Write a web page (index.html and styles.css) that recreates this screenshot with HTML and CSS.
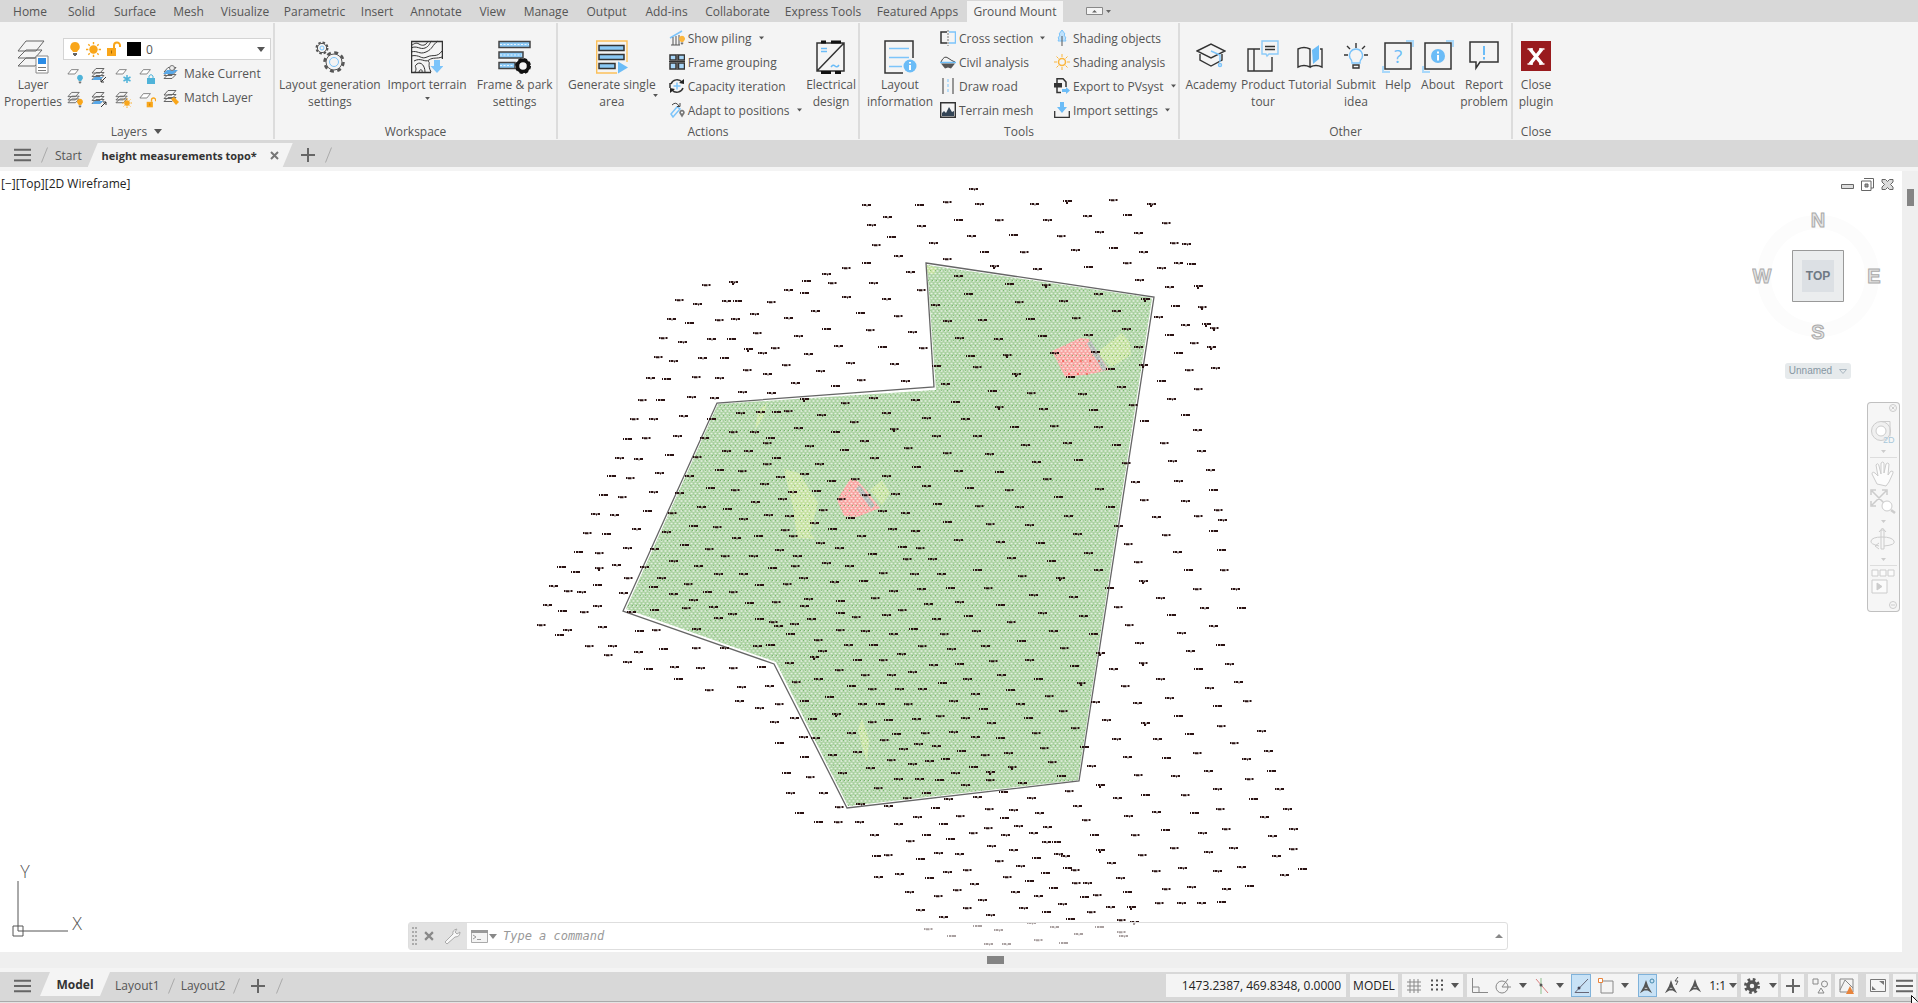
FILE: index.html
```html
<!DOCTYPE html>
<html lang="en">
<head>
<meta charset="utf-8">
<title>height measurements topo*</title>
<link rel="stylesheet" href="styles.css">
</head>
<body>
<svg class="defs" aria-hidden="true">
  <defs>
    <symbol id="sheet" viewBox="0 0 16 16"><path d="M5 3h8l-4 5H1z" fill="#fff" stroke="#777"/></symbol>
    <symbol id="stack" viewBox="0 0 16 16"><path d="M5 8.500h8l-4 4H1zM5 5.500h8l-4 4H1zM5 1.500h8l-4 4.500H1z" fill="#f4f4f4" stroke="#666"/></symbol>
    <symbol id="bulb" viewBox="0 0 12 16"><path d="M6 1a4.800 4.800 0 0 1 3 8.500L8 11H4L3 9.500A4.800 4.800 0 0 1 6 1z" fill="currentColor"/><path d="M4 12h4v2H7v1H5v-1H4z" fill="#666"/></symbol>
    <symbol id="sun" viewBox="0 0 16 16"><circle cx="8" cy="8" r="4.500" fill="currentColor"/><path d="M8 0v2.500M8 13.500V16M0 8h2.500M13.500 8H16M2.500 2.500l1.500 1.500M12 12l1.500 1.500M13.500 2.500L12 4M4 12l-1.500 1.500" stroke="currentColor" stroke-width="1.500"/></symbol>
    <symbol id="lock" viewBox="0 0 16 16"><path d="M1 7h9v8H1z" fill="currentColor"/><path d="M8 7V4.500a3 3 0 0 1 6 0V6" fill="none" stroke="currentColor" stroke-width="2"/><path d="M5.500 9.500v3" stroke="#a86a00"/></symbol>
    <symbol id="tri" viewBox="0 0 8 5"><path d="M0 0h8L4 5z" fill="currentColor"/></symbol>
    <symbol id="menu" viewBox="0 0 18 14"><path d="M0 1.500h18M0 7h18M0 12.500h18" stroke="#666" stroke-width="2"/></symbol>
    <symbol id="slash" viewBox="0 0 7 16"><path d="M.5 15.500l6-15" stroke="#aaa"/></symbol>
    <symbol id="plus" viewBox="0 0 16 16"><path d="M8 1v14M1 8h14" stroke="#666" stroke-width="2"/></symbol>
    <symbol id="compass" viewBox="0 0 16 16"><path d="M8 0l2.500 7L15 15l-5-3H6l-5 3 4.500-8z" fill="#555"/><path d="M6.500 9.500h3" stroke="#eee"/></symbol>
  </defs>
</svg>

<nav class="menu-tabs" aria-label="Ribbon tabs">
  <a href="#">Home</a><a href="#">Solid</a><a href="#">Surface</a><a href="#">Mesh</a><a href="#">Visualize</a><a href="#">Parametric</a><a href="#">Insert</a><a href="#">Annotate</a><a href="#">View</a><a href="#">Manage</a><a href="#">Output</a><a href="#">Add-ins</a><a href="#">Collaborate</a><a href="#">Express Tools</a><a href="#">Featured Apps</a><a href="#" class="current">Ground Mount</a>
  <button class="collapse" aria-label="Minimize ribbon"><svg width="28" height="9" viewBox="0 0 28 9"><path d="M.5.500h16v7H.5z" fill="#f4f4f4" stroke="#888"/><path d="M6 5.500h5L8.500 3zM20 3h5l-2.500 3z" fill="#666"/></svg></button>
</nav>

<header class="ribbon">
  <section class="panel layers">
    <div class="panel-body">
      <button class="big"><svg width="32" height="34" viewBox="0 0 32 34"><g fill="#f4f4f4" stroke="#666"><path d="M9 18h16l-7 8H1zM9 10h16l-7 8H1zM9 1h18l-8 10H1z"/><path d="M19 16h12v17H19z" fill="#fff" stroke="#888"/></g><path d="M21 18h8v6h-8z" fill="#2b8ce6"/><path d="M21 27.500h8M21 30.500h8" stroke="#777"/></svg><span>Layer<br>Properties</span></button>
      <div class="layer-tools">
        <div class="layer-box">
          <svg width="12" height="16" class="amber"><use href="#bulb"/></svg>
          <svg width="15" height="15" class="amber"><use href="#sun"/></svg>
          <svg width="16" height="16" class="amber"><use href="#lock"/></svg>
          <i class="swatch"></i>
          <select aria-label="Current layer"><option>0</option></select>
          <svg width="8" height="5" class="arrow"><use href="#tri"/></svg>
        </div>
        <div class="icon-row">
          <button aria-label="Layer off"><svg width="17" height="17"><use href="#sheet" width="14" height="14"/><use href="#bulb" x="9" y="7" width="8" height="10" color="#4fb3d9"/></svg></button>
          <button aria-label="Isolate"><svg width="17" height="17"><use href="#stack" width="16" height="16"/><path d="M4 10h8l-3 3H1z" fill="#58a8e8"/><path d="M15 10l-5 5m0-3v3h3" stroke="#333" fill="none"/></svg></button>
          <button aria-label="Freeze"><svg width="17" height="17"><use href="#sheet" width="14" height="14"/><path d="M12 8v8M8.500 10l7 4M15.500 10l-7 4" stroke="#4fb3d9" stroke-width="1.500"/></svg></button>
          <button aria-label="Lock"><svg width="17" height="17"><use href="#sheet" width="14" height="14"/><path d="M8 11h8v6H8z" fill="#4fb3d9"/><path d="M10 11V9q2-3 4 0v2" stroke="#4fb3d9" fill="none"/></svg></button>
          <button class="wide"><svg width="17" height="17"><use href="#stack" y="1" width="16" height="16"/><path d="M4 5h11l-5 4H0z" fill="#58a8e8"/><circle cx="9" cy="3" r="2.500" fill="#eee" stroke="#777"/></svg>Make Current</button>
        </div>
        <div class="icon-row">
          <button aria-label="Layer on"><svg width="17" height="17"><use href="#stack" width="15" height="15"/><use href="#bulb" x="9" y="7" width="8" height="10" color="#f9a61a"/></svg></button>
          <button aria-label="Unisolate"><svg width="17" height="17"><use href="#stack" width="16" height="16"/><path d="M4 10h8l-3 3H1z" fill="#58a8e8"/><path d="M10 16l5-5m-3 0h3v3" stroke="#333" fill="none"/></svg></button>
          <button aria-label="Thaw"><svg width="17" height="17"><use href="#stack" width="15" height="15"/><use href="#sun" x="7" y="7" width="10" height="10" color="#f9a61a"/></svg></button>
          <button aria-label="Unlock"><svg width="17" height="17"><use href="#sheet" width="14" height="14"/><use href="#lock" x="7" y="6" width="11" height="11" color="#f9a61a"/></svg></button>
          <button class="wide"><svg width="17" height="17"><use href="#stack" width="16" height="16"/><path d="M8 10l3-2 5 5-3 3z" fill="#f9a61a"/></svg>Match Layer</button>
        </div>
      </div>
    </div>
    <h2>Layers <svg width="8" height="5"><use href="#tri"/></svg></h2>
  </section>

  <section class="panel workspace">
    <div class="panel-body">
      <button class="big"><svg width="32" height="34" viewBox="0 0 32 34" fill="none"><g stroke="#555"><circle cx="8" cy="8" r="5.500" stroke-width="2" stroke-dasharray="2.500 1.800"/><circle cx="8" cy="8" r="4.600"/><circle cx="20" cy="22" r="9.500" stroke-width="2.500" stroke-dasharray="4 3.450"/><circle cx="20" cy="22" r="8"/></g><circle cx="8" cy="8" r="2" stroke="#7cc4fa"/><circle cx="20" cy="22" r="4.500" stroke="#7cc4fa"/></svg><span>Layout generation<br>settings</span></button>
      <button class="big"><svg width="32" height="34" viewBox="0 0 32 34" fill="none"><path d="M20 32.500H.5v-31h31V19" stroke="#333" stroke-width="1.500"/><path d="M0 8c6-3 9 2 14 0s4-5 7-7M0 12c7-2 8 3 15 0s6-7 12-11M0 16c9-2 10 4 16 1s10 1 15-6M3 21c7-4 11 2 15-1s8-1 13-3M4 32c3-5-2-5 2-8s8 2 8 8M8 32c1-4 4-2 3 0M17 1c-2 5-6 5-9 3S3 4 1 5M20 32c-4-8 0-9-3-11" stroke="#333"/><path d="M23 20h6v6h3.500L26 33l-6.500-7H23z" fill="#7cc4fa"/></svg><span>Import terrain</span><svg class="drop" width="5" height="3"><use href="#tri"/></svg></button>
      <button class="big"><svg width="33" height="34" viewBox="0 0 33 34"><g fill="#8bc9f5" stroke="#444" stroke-width="1.500"><path d="M1 1.500h31v6H1zM1 12h24v6H1zM1 22.500h16v6H1z"/></g><path d="M2 4.500h29M2 15h22M2 25.500h14" stroke="#e8f4fc" stroke-dasharray="2 1.500"/><circle cx="25" cy="26" r="5.500" fill="#f4f4f4" stroke="#111" stroke-width="3.500"/><circle cx="25" cy="26" r="6.500" fill="none" stroke="#111" stroke-width="3" stroke-dasharray="3 2.100"/></svg><span>Frame &amp; park<br>settings</span></button>
    </div>
    <h2>Workspace</h2>
  </section>

  <section class="panel actions">
    <div class="panel-body">
      <button class="big gen"><svg width="32" height="34" viewBox="0 0 32 34"><path d="M21 33H.7V1H31v21" fill="none" stroke="#fbc05a" stroke-width="1.400"/><g fill="#8bc9f5" stroke="#333" stroke-width="1.500"><path d="M3 5.500h25v5H3zM3 14.500h25v5H3zM3 23.500h16v5H3z"/></g><path d="M22 21.500l10 6-10 6z" fill="#6bbcf7"/></svg><span>Generate single<br>area</span><svg class="drop" width="5" height="3"><use href="#tri"/></svg></button>
      <div class="stack">
        <button><svg width="16" height="16" viewBox="0 0 16 16"><path d="M1 8L13 1" stroke="#7cc4fa" stroke-width="1.500"/><path d="M4 7v8M7 6v9M10 5v10M2 15h9" stroke="#555"/><use href="#bulb" x="9" y="5" width="8" height="10" color="#fbb63d"/></svg><span>Show piling</span><svg class="drop" width="5" height="4"><use href="#tri"/></svg></button>
        <button><svg width="16" height="16" viewBox="0 0 16 16"><g fill="#a8d6f8" stroke="#333" stroke-width="1.500"><path d="M1 1h6v5H1zM9.500 1h6v5h-6zM1 9h6v6H1zM9.500 9h6v6h-6z"/></g><path d="M0 7.500h16M8.200 0v16" stroke="#333"/></svg><span>Frame grouping</span></button>
        <button><svg width="16" height="16" viewBox="0 0 16 16" fill="none"><path d="M2 6a6.500 6.500 0 0 1 11-2M14 10a6.500 6.500 0 0 1-11 2M1 5v5" stroke="#333" stroke-width="1.500"/><path d="M10 5l5 1V1zM6 11l-5-1v5z" fill="#222"/><path d="M8 4.500v7M4.500 8h7" stroke="#7cc4fa" stroke-width="1.500"/></svg><span>Capacity iteration</span></button>
        <button><svg width="16" height="16" viewBox="0 0 16 16" fill="none"><path d="M2 12l6-7 3 2-7 8z" stroke="#7cc4fa" stroke-width="1.500"/><path d="M3 3q4-4 7 1m1-3v3.500H8" stroke="#444"/><path d="M13 15.500l-2.500-4a2.700 2.700 0 1 1 5 0z" fill="#777"/><circle cx="13" cy="10.500" r="1" fill="#fff"/></svg><span>Adapt to positions</span><svg class="drop" width="5" height="4"><use href="#tri"/></svg></button>
      </div>
      <button class="big elec"><svg width="30" height="34" viewBox="0 0 30 34" fill="none"><path d="M1 3h27v28H1zM1 31L28 3" stroke="#333" stroke-width="1.500"/><path d="M5 2h5M15 2h10M5 32.500h10M19 32.500h6" stroke="#111" stroke-width="3"/><path d="M5 8.500h6M5 11.500h6M15 27q2-3 4-1t4-1" stroke="#6bbcf7" stroke-width="1.500"/></svg><span>Electrical<br>design</span></button>
    </div>
    <h2>Actions</h2>
  </section>

  <section class="panel tools">
    <div class="panel-body">
      <button class="big info"><svg width="33" height="34" viewBox="0 0 33 34" fill="none"><path d="M19 33H1V1h28v17" stroke="#333" stroke-width="1.500"/><path d="M5 8.500h20M5 17.500h20M5 26.500h13" stroke="#7cc4fa" stroke-width="1.500"/><circle cx="26" cy="26" r="6.500" fill="#6bbcf7"/><path d="M26 22v1.500M26 25v5" stroke="#fff" stroke-width="2"/></svg><span>Layout<br>information</span></button>
      <div class="stack one">
        <button><svg width="16" height="16" viewBox="0 0 16 16" fill="none"><path d="M7 2H1v11h6" stroke="#333" stroke-width="1.500"/><path d="M9 2h6.500v11H9" stroke="#7cc4fa" stroke-width="1.500"/><path d="M8 0v16" stroke="#777" stroke-dasharray="2 1"/></svg><span>Cross section</span><svg class="drop" width="5" height="4"><use href="#tri"/></svg></button>
        <button><svg width="16" height="16" viewBox="0 0 16 16"><path d="M1 8q3-7 7-4t7 4" fill="none" stroke="#444"/><path d="M0 8.500h16" stroke="#6bbcf7" stroke-width="1.500"/><path d="M1 9.500h14l-4 5-3-1-3 1z" fill="#555"/></svg><span>Civil analysis</span></button>
        <button><svg width="16" height="16" viewBox="0 0 16 16"><path d="M3 0v16M13 0v16" stroke="#777" stroke-width="1.500"/><path d="M8 1v14" stroke="#7cc4fa" stroke-dasharray="3 2"/></svg><span>Draw road</span></button>
        <button><svg width="16" height="16" viewBox="0 0 16 16"><path d="M.7.700h14.600v14.600H.7z" fill="none" stroke="#333" stroke-width="1.400"/><path d="M2 14v-3l2-2 2 2 3-6 3 5 2-1v5z" fill="#345"/></svg><span>Terrain mesh</span></button>
      </div>
      <div class="stack two">
        <button><svg width="16" height="16" viewBox="0 0 16 16"><path d="M8 0l3 4-1 1 2 3-1 1 1 2H4l1-2-1-1 2-3-1-1z" fill="#bfe1fb" stroke="#7cc4fa"/><path d="M8 6v10" stroke="#555"/></svg><span>Shading objects</span></button>
        <button><svg width="16" height="16" viewBox="0 0 16 16"><g fill="none" stroke="#fbb63d"><circle cx="8" cy="8" r="3.500" stroke-width="1.500"/><path d="M8 0v3M8 13v3M0 8h3M13 8h3M2.500 2.500l2 2M11.500 11.500l2 2M13.500 2.500l-2 2M4.500 11.500l-2 2"/></g></svg><span>Shading analysis</span></button>
        <button><svg width="16" height="16" viewBox="0 0 16 16" fill="none"><path d="M3 5V.700h6L12 4v5M3 9v5.500h4" stroke="#333" stroke-width="1.500"/><path d="M0 5h8v4.500H0z" fill="#333"/><path d="M8 11h4V9l4 3.500-4 3.500v-2H8z" fill="#6bbcf7"/></svg><span>Export to PVsyst</span><svg class="drop" width="5" height="4"><use href="#tri"/></svg></button>
        <button><svg width="16" height="16" viewBox="0 0 16 16"><path d="M6 0h4v5h3l-5 6-5-6h3z" fill="#6bbcf7"/><path d="M.7 9v6.300h14.600V9" fill="none" stroke="#333" stroke-width="1.300"/></svg><span>Import settings</span><svg class="drop" width="5" height="4"><use href="#tri"/></svg></button>
      </div>
    </div>
    <h2>Tools</h2>
  </section>

  <section class="panel other">
    <div class="panel-body">
      <button class="big"><svg width="30" height="34" viewBox="0 0 30 34" fill="none" stroke="#333" stroke-width="1.400"><path d="M1 11L15 4l14 7-14 7zM4 14v6l11 6 11-6v-6"/><path d="M15 11l9 4v7" stroke="#7cc4fa"/><circle cx="24" cy="25" r="1.500" stroke="#7cc4fa"/></svg><span>Academy</span></button>
      <button class="big"><svg width="32" height="34" viewBox="0 0 32 34" fill="none" stroke="#333" stroke-width="1.400"><path d="M13 9H1v22h24V17M7 9v22"/><path d="M15 1h16v13h-9l-2 2-1-2h-4z" stroke="#8ccaf8"/><path d="M18 6.500h10M18 9.500h10"/></svg><span>Product<br>tour</span></button>
      <button class="big"><svg width="26" height="34" viewBox="0 0 26 34" fill="none" stroke="#333" stroke-width="1.400"><path d="M13 27q-6-3-12 0V9q6-3 12 0zm0 0q6-3 12 0V9h-2"/><path d="M15 10l7-5v14l-6 5z" fill="#6bbcf7" stroke="none"/></svg><span>Tutorial</span></button>
      <button class="big"><svg width="26" height="34" viewBox="0 0 26 34" fill="none" stroke="#333" stroke-width="1.400"><path d="M9 23q0-3-2-5a6.500 6.500 0 1 1 12 0q-2 2-2 5z" stroke="#7cc4fa"/><path d="M10 25h6v3h-6zM13 3v5M4 6l3 3M22 6l-3 3M1 15h4M21 15h4"/></svg><span>Submit<br>idea</span></button>
      <button class="big"><svg width="32" height="34" viewBox="0 0 32 34" fill="none"><path d="M24 1h7v6M1 26v6h7" stroke="#a9d8fa" stroke-width="2"/><path d="M3 3h26v26H3z" stroke="#333" stroke-width="1.500"/><text x="16" y="23" class="glyph">?</text></svg><span>Help</span></button>
      <button class="big"><svg width="32" height="34" viewBox="0 0 32 34" fill="none"><path d="M24 1h7v6M1 26v6h7" stroke="#a9d8fa" stroke-width="2"/><path d="M3 3h26v26H3z" stroke="#333" stroke-width="1.500"/><circle cx="16" cy="16" r="7" fill="#6bbcf7"/><path d="M16 11.500v2M16 15v5.500" stroke="#fff" stroke-width="2"/></svg><span>About</span></button>
      <button class="big"><svg width="30" height="34" viewBox="0 0 30 34" fill="none"><path d="M1 2h28v20H11l-4 6v-6H1z" stroke="#333" stroke-width="1.500"/><path d="M15 6v9M15 17v2.500" stroke="#6bbcf7" stroke-width="2"/></svg><span>Report<br>problem</span></button>
    </div>
    <h2>Other</h2>
  </section>

  <section class="panel close">
    <div class="panel-body">
      <button class="big"><svg width="30" height="34" viewBox="0 0 30 34"><path d="M0 1h30v30H0z" fill="#991b1e"/><path d="M9 9l12 15M21 9L9 24" stroke="#fff" stroke-width="3.500"/><path d="M6.500 9H12M18 9h5.500M6.500 24H12M18 24h5.500" stroke="#fff" stroke-width="1.500"/></svg><span>Close<br>plugin</span></button>
    </div>
    <h2>Close</h2>
  </section>
</header>

<nav class="tabbar file-tabs" aria-label="Drawings">
  <button aria-label="Menu" class="burger"><svg width="17" height="14"><use href="#menu"/></svg></button>
  <svg width="7" height="16"><use href="#slash"/></svg>
  <a href="#" class="tab">Start</a>
  <a href="#" class="tab active">height measurements topo*<svg width="9" height="9" viewBox="0 0 9 9"><path d="M1 1l7 7M8 1L1 8" stroke="#777" stroke-width="2"/></svg></a>
  <button aria-label="New drawing"><svg width="16" height="16"><use href="#plus"/></svg></button>
  <svg width="7" height="16"><use href="#slash"/></svg>
</nav>

<main class="workarea">
  <div class="viewport">
    <svg id="drawing" class="drawing" viewBox="0 171 1902 781" aria-label="Topographic survey">
      <defs>
        <pattern id="dots" width="4" height="5" patternUnits="userSpaceOnUse"><path d="M.5 1h2M2.500 3.500H4M0 3.500h.5" stroke="#fff" stroke-width="1.600" opacity=".7"/></pattern>
        <pattern id="rows" width="40" height="25" patternUnits="userSpaceOnUse"><path d="M0 5.500h40" stroke="#5fa653" stroke-dasharray="1 3" opacity=".75"/><path d="M2 10.500h38" stroke="#5fa653" stroke-dasharray="1 7" opacity=".5"/><path d="M3 15.500h37" stroke="#5fa653" stroke-dasharray="1 5" opacity=".6"/><path d="M0 20.500h40" stroke="#5fa653" stroke-dasharray="1 4" opacity=".6"/></pattern>
        <clipPath id="site"><path d="M927 265L1152 298 1078 780 848 806 776 662 626 609 718 404 936 390z"/></clipPath>
      </defs>
      <g clip-path="url(#site)">
        <path fill="#a9d19f" d="M600 250h560v570H600z"/>
        <path fill="#c3e09c" d="M1122 333l8 10 1 12-19 12-16-14zM882 480l8 13-8 12-12-15zM784 469l15 4 19 30-8 30 5 6-18-1-4-30zM767 402l-3 14-9 14 3-18zM862 718l7 22-2 23-5-17-4-16zM927 265l10 3-3 6-7-1z"/>
        <path fill="#f7a19d" d="M1080 338l9 1 20 31-18 4-26 3-13-26zM850 479l7 1 9 10 14 18-23 9-13-1-7-16z"/>
        <path d="M1089 342l16 28M858 487l15 20" stroke="#a9b0ad" stroke-width="5"/>
        <path fill="url(#dots)" d="M600 250h560v570H600z"/>
        <path fill="url(#rows)" d="M600 250h560v570H600z"/>
        <path d="M1062 361h45M1068 374h20" stroke="#f02b1d" stroke-dasharray="2 7"/>
      </g>
      <path d="M926 263L1154 297 1079 781 847 808 774 664 623 611 717 403 934 387z" fill="none" stroke="#666" stroke-width="1.300"/>
      <path id="marks" class="marks"/>
      <g class="ucs"><path d="M18 881v50h50M13 926h10v10H13z"/><text x="25" y="878">Y</text><text x="77" y="930">X</text></g>
    </svg>
    <p class="view-label">[−][Top][2D Wireframe]</p>
    <div class="win-buttons">
      <button aria-label="Minimize"><svg width="13" height="13" viewBox="0 0 13 13"><path d="M.5 6.500h12v4H.5z" fill="#ddd" stroke="#666"/></svg></button>
      <button aria-label="Restore"><svg width="13" height="13" viewBox="0 0 13 13" fill="none" stroke="#666"><path d="M3 .5h9.500V10H10M.5 3H10v9.500H.5z"/><path d="M4 6h3v3H4z" fill="#999"/></svg></button>
      <button aria-label="Close"><svg width="13" height="13" viewBox="0 0 13 13"><path d="M1 1.500h3.500l2 2 2-2H12v2.500L9.500 6.500 12 9v2.500H8.500l-2-2-2 2H1V9l2.500-2.500L1 4z" fill="#ddd" stroke="#666"/></svg></button>
    </div>
    <div class="cube">
      <svg width="132" height="132" viewBox="0 0 132 132"><circle cx="66" cy="66" r="54" fill="none" stroke="#fcfcfc" stroke-width="14"/><path d="M40.500 40.500h51v51h-51z" fill="#ebedee" stroke="#999"/><path d="M50 50h32v32H50z" fill="#dce0e4"/><g class="dirs"><text x="66" y="17">N</text><text x="66" y="129">S</text><text x="10" y="73">W</text><text x="122" y="73">E</text></g><text x="66" y="70" class="top">TOP</text></svg>
      <button>Unnamed <svg width="8" height="5" viewBox="0 0 8 5"><path d="M.5.500h7L4 4.500z" fill="none" stroke="#a9b6c0"/></svg></button>
    </div>
    <div class="navbar">
      <svg width="33" height="210" viewBox="0 0 33 210" fill="none" stroke="#ccc"><circle cx="26" cy="6" r="3.500"/><path d="M24.500 4.500l3 3m0-3l-3 3"/><circle cx="14" cy="29" r="9.500" fill="#f0f0f0"/><path d="M14 19.500h9v15"/><circle cx="14" cy="29" r="5" fill="#fff"/><text x="16" y="41" class="two-d">2D</text><path d="M14 48h5l-2.500 3zM14 118h5l-2.500 3zM14 156h5l-2.500 3z" fill="#ccc" stroke="none"/><path d="M3 55.500h27M3 163.500h27" stroke="#ddd"/><path d="M10 82l-5-10q0-3 3-1l3 3-2-11q2-3 3 1l2 8V61q2-2 3 0v10l2-9q2-2 3 0l-1 11 3-4q3 0 2 2l-4 9-3 4z" fill="#fcfcfc"/><path d="M5 89l14 14M19 89L5 103M4 93v-5h5M15 88h5v5M4 99v5h5" stroke-width="1.500"/><circle cx="20" cy="104" r="5" fill="#fff"/><path d="M24 108l4 3" stroke-width="2.500"/><path d="M14 128h3v19h-3zM12 130l3.500-4 3.500 4M12 144q-9-2-8-5 1-4 11-4t12 4-10 5M12 141l-4 3 4 3"/><path d="M5 168h6v6H5zM13 168h6v6h-6zM21 168h6v6h-6zM5 178h15v13H5z" fill="#fbfbfb"/><path d="M10 181l5 3.500-5 3.500z" fill="#ccc"/><circle cx="26" cy="203" r="3.500"/><path d="M24 203h4"/></svg>
    </div>
    <form class="command">
      <div class="grip"><svg width="5" height="18" viewBox="0 0 5 18"><path d="M1 0v18M4 0v18" stroke="#999" stroke-width="1.500" stroke-dasharray="2 2"/></svg><svg width="10" height="10" viewBox="0 0 9 9"><path d="M1 1l7 7M8 1L1 8" stroke="#888" stroke-width="2"/></svg><svg width="17" height="17" viewBox="0 0 17 17"><path d="M1 14l8-8q-1-4 4-5L11 4l2 2 3-2q0 5-5 5l-8 7z" fill="#f8f8f8" stroke="#aaa"/></svg></div>
      <svg class="prompt" width="26" height="13" viewBox="0 0 26 13"><path d="M.5.500h16v12H.5z" fill="#f4f4f4" stroke="#aaa"/><path d="M0 0h17v3H0z" fill="#999"/><path d="M2 5l3 2-3 2M6 9.500h4" fill="none" stroke="#999"/><path d="M18 4h8l-4 5z" fill="#888"/></svg>
      <input type="text" placeholder="Type a command" aria-label="Command">
      <svg class="up" width="8" height="4" viewBox="0 0 8 4"><path d="M0 4h8L4 0z" fill="#888"/></svg>
    </form>
  </div>
  <div class="vscroll"><i></i></div>
</main>
<div class="hscroll"><i></i></div>

<footer class="tabbar status">
  <button aria-label="Menu" class="burger"><svg width="17" height="14"><use href="#menu"/></svg></button>
  <a href="#" class="tab active">Model</a>
  <a href="#" class="tab">Layout1</a>
  <svg width="7" height="16"><use href="#slash"/></svg>
  <a href="#" class="tab">Layout2</a>
  <svg width="7" height="16"><use href="#slash"/></svg>
  <button aria-label="New layout" class="add"><svg width="16" height="16"><use href="#plus"/></svg></button>
  <svg width="7" height="16"><use href="#slash"/></svg>
  <div class="toggles">
    <span class="coords">1473.2387, 469.8348, 0.0000</span>
    <button class="model">MODEL</button>
    <div class="group grid">
      <button aria-label="Grid"><svg width="16" height="16" viewBox="0 0 16 16"><path d="M4 1v14M8 1v14M12 1v14M1 4h14M1 8h14M1 12h14" stroke="#888"/></svg></button>
      <button aria-label="Snap"><svg width="13" height="13" viewBox="0 0 13 13"><path d="M1 1.500h12M1 6h12M1 10.500h12" stroke="#555" stroke-width="2" stroke-dasharray="2 3"/></svg></button>
      <svg width="8" height="5"><use href="#tri"/></svg>
    </div>
    <div class="group modes">
      <button aria-label="Ortho"><svg width="17" height="16" viewBox="0 0 17 16"><path d="M1.500 0v14.500H17M1.500 9H8v5" fill="none" stroke="#888"/></svg></button>
      <button aria-label="Polar"><svg width="17" height="16" viewBox="0 0 17 16"><circle cx="7" cy="9" r="6" fill="none" stroke="#888"/><path d="M7 9h9M7 9l6-8" stroke="#888"/></svg></button>
      <svg width="8" height="5"><use href="#tri"/></svg>
      <button aria-label="Isodraft"><svg width="15" height="16" viewBox="0 0 15 16"><path d="M2 1l12 14" stroke="#d98080"/><path d="M7 0v16" stroke="#8fc08f"/><circle cx="7" cy="7" r="1.500" fill="#555"/></svg></button>
      <svg width="8" height="5"><use href="#tri"/></svg>
      <button aria-label="Object tracking" class="on"><svg width="16" height="16" viewBox="0 0 16 16"><path d="M15 1L2 14.500h14" fill="none" stroke="#667"/><circle cx="6" cy="10" r="1.500" fill="#445"/></svg></button>
      <button aria-label="Object snap"><svg width="16" height="16" viewBox="0 0 16 16"><path d="M3 3h12v12H3z" fill="none" stroke="#888"/><path d="M.5.500h4v4h-4z" fill="#fff" stroke="#e8843c"/></svg></button>
      <svg width="8" height="5"><use href="#tri"/></svg>
      <button aria-label="Annotation visibility" class="on far"><svg width="17" height="18" viewBox="0 0 17 18"><use href="#compass" y="2" width="14" height="16"/><circle cx="13" cy="4" r="2" fill="none" stroke="#48a"/></svg></button>
      <button aria-label="Annotation autoscale"><svg width="17" height="18" viewBox="0 0 17 18"><use href="#compass" y="2" width="14" height="16"/><path d="M14 0l-3 4h3l-2 4" fill="none" stroke="#555"/></svg></button>
      <button aria-label="Annotation scale"><svg width="14" height="16"><use href="#compass"/></svg></button>
      <button class="scale">1:1 <svg width="8" height="5"><use href="#tri"/></svg></button>
    </div>
    <div class="group gear">
      <button aria-label="Workspace switching"><svg width="16" height="16" viewBox="0 0 16 16" fill="none" stroke="#555"><circle cx="8" cy="8" r="4" stroke-width="3.500"/><circle cx="8" cy="8" r="6.500" stroke-width="3" stroke-dasharray="2.600 2.500"/></svg></button>
      <svg width="8" height="5"><use href="#tri"/></svg>
    </div>
    <button class="single" aria-label="Annotation monitor"><svg width="16" height="16"><use href="#plus"/></svg></button>
    <button class="single" aria-label="Isolate objects"><svg width="16" height="16" viewBox="0 0 16 16" fill="none" stroke="#888"><path d="M1 1h5v5H1zM6 15l3-5 3 5z"/><circle cx="12.500" cy="6" r="3"/></svg></button>
    <button class="single" aria-label="Graphics performance"><svg width="16" height="16" viewBox="0 0 16 16" fill="none" stroke="#888"><path d="M1 1h13v13H1zM1 12l5-10 8 8"/><path d="M11 8l4 8H7z" fill="#e8843c" stroke="none"/></svg></button>
    <button class="single wider" aria-label="Clean screen"><svg width="16" height="13" viewBox="0 0 16 13"><path d="M.5.500h15v12H.5z" fill="none" stroke="#777"/><path d="M9 2h5v4zM2 11V7l4 4z" fill="#777"/></svg></button>
    <button class="single" aria-label="Customization"><svg width="17" height="14"><use href="#menu"/></svg></button>
  </div>
  <svg class="pointer" width="7" height="8" viewBox="0 0 7 8"><path d="M.5 8V.500l6 6" fill="#fff" stroke="#111"/></svg>
</footer>
<script src="survey.js"></script>
</body>
</html>
```
FILE: styles.css
```css
* { box-sizing: border-box; }
html, body { height: 100%; }
body {
  margin: 0;
  display: flex;
  flex-direction: column;
  overflow: hidden;
  background: #e4e4e4;
  color: #555;
  font: 12px/17px "Open Sans", "Noto Sans", sans-serif;
}
button {
  margin: 0;
  padding: 0;
  border: 0;
  background: none;
  color: inherit;
  font: inherit;
  white-space: nowrap;
}
a { color: inherit; text-decoration: none; white-space: nowrap; }
svg { flex: none; display: block; }
.defs { position: absolute; width: 0; height: 0; }

/* ribbon tabs */
.menu-tabs {
  display: grid;
  grid-template-columns: 54px 49px 58px 49px 64px 75px 50px 68px 45px 62px 59px 61px 81px 90px 99px 96px auto;
  flex: none;
  height: 22px;
  padding: 1px 0 0 3px;
  background: #d8d8d8;
  line-height: 21px;
  text-align: center;
}
.menu-tabs a { display: flex; justify-content: center; }
.menu-tabs .current { background: #f4f4f4; }
.collapse { justify-self: start; padding-left: 23px; }

/* ribbon */
.ribbon { display: flex; flex: none; height: 118px; background: #f4f4f4; }
.panel {
  display: flex;
  flex-direction: column;
  flex: none;
  margin: 1px 0;
  border-right: 2px solid #dcdcdc;
}
.panel-body { display: flex; flex: 1; }
.panel h2 {
  display: flex;
  align-items: center;
  justify-content: center;
  gap: 7px;
  height: 16px;
  margin: 0;
  font-size: 12px;
  font-weight: 400;
}
.big {
  position: relative;
  display: flex;
  flex-direction: column;
  align-items: center;
  gap: 2px;
  padding-top: 17px;
  line-height: 17px;
}
.layers { width: 275px; }
.layers .big { width: 60px; padding-left: 6px; }
.layer-tools { padding: 15px 0 0 3px; }
.layer-box {
  display: flex;
  align-items: center;
  gap: 5px;
  width: 208px;
  height: 22px;
  margin-bottom: 2px;
  padding: 0 5px;
  border: 1px solid #d4d4d4;
  background: #fff;
}
.amber { color: #f9a61a; }
.swatch { width: 14px; height: 14px; background: #000; }
.layer-box select {
  flex: 1;
  appearance: none;
  border: 0;
  background: none;
  color: inherit;
  font: inherit;
}
.arrow { color: #555; }
.icon-row { display: flex; gap: 7px; height: 24px; padding: 3px 0 0 4px; }
.icon-row .wide { display: flex; gap: 4px; }

.workspace { width: 283px; }
.workspace .panel-body { padding-left: 4px; }
.workspace .big { width: 102px; }
.workspace .big + .big { width: 94px; }
.workspace .big + .big + .big { width: 84px; }
.workspace .drop { margin-top: 2px; }

.actions { width: 302px; }
.gen { width: 92px; margin-left: 8px; }
.gen .drop { position: absolute; right: 0; top: 71px; }
.stack { display: flex; flex-direction: column; padding-top: 3px; }
.stack button { display: flex; align-items: center; gap: 3px; height: 24px; }
.stack .drop { margin-left: 4px; }
.actions .stack { width: 147px; padding-left: 11px; }
.elec { width: 54px; }

.tools { width: 320px; }
.info { width: 64px; margin-left: 8px; }
.stack.one { width: 114px; margin-left: 8px; }
.stack.two { width: 124px; }

.other { width: 333px; }
.other .panel-body { display: grid; grid-template-columns: 52px 52px 42px 50px 34px 46px 46px; padding-left: 5px; align-items: start; }
.glyph { font: 19px "Open Sans", sans-serif; fill: #6bbcf7; text-anchor: middle; }
.close { width: 46px; border: 0; }
.close .big { width: 46px; }

/* document and layout tabs */
.tabbar { display: flex; align-items: center; flex: none; }
.file-tabs { height: 31px; padding: 3px 0 0 14px; background: #d8d8d8; border-bottom: 4px solid #f4f4f4; }
.burger { width: 27px; }
.tab.active {
  display: flex;
  align-items: center;
  justify-content: center;
  gap: 13px;
  background: #f4f4f4;
  color: #333;
  font-weight: 700;
  clip-path: polygon(10px 0, 100% 0, calc(100% - 10px) 100%, 0 100%);
}
.file-tabs .tab { padding-left: 7px; }
.file-tabs .active { width: 205px; height: 24px; margin-left: 6px; padding: 0; font-size: 11px; }
.file-tabs button:not(.burger) { padding: 0 9px 0 7px; }

/* drawing area */
.workarea { display: flex; flex: 1; min-height: 0; background: #fff; }
.viewport { position: relative; flex: 1; min-width: 0; overflow: hidden; }
.drawing { position: absolute; inset: 0; width: 100%; height: 100%; }
.marks { fill: none; stroke: #2a1212; stroke-width: 2; }
.ucs { fill: none; stroke: #555; }
.ucs text { fill: #555; stroke: none; font: 300 18px "Open Sans", sans-serif; text-anchor: middle; }
.view-label { position: absolute; left: 1px; top: 4px; margin: 0; color: #222; }
.win-buttons { position: absolute; right: 8px; top: 7px; display: flex; gap: 7px; }
.cube { position: absolute; right: 18px; top: 39px; display: flex; flex-direction: column; align-items: center; gap: 21px; }
.dirs { font: 700 20px "Liberation Sans", sans-serif; fill: #e4e4e4; stroke: #aaa; text-anchor: middle; }
.top { font: 700 12px "Liberation Sans", sans-serif; fill: #707a84; text-anchor: middle; }
.cube button {
  display: flex;
  align-items: center;
  gap: 7px;
  height: 16px;
  padding: 0 4px;
  border-radius: 3px;
  background: #e6eaec;
  color: #8797a3;
  font: 10px/16px "Liberation Sans", sans-serif;
}
.navbar { position: absolute; right: 2px; top: 231px; border-radius: 4px; background: #f6f6f6; box-shadow: inset 0 0 0 1px #c0c0c0; }
.two-d { font: 9px "Liberation Sans", sans-serif; fill: #a9c8da; stroke: none; }
.command {
  position: absolute;
  left: 408px;
  right: 394px;
  bottom: 2px;
  display: flex;
  align-items: center;
  height: 28px;
  border: 1px solid #dedede;
  border-radius: 3px;
  background: rgba(255, 255, 255, .6);
}
.grip { display: flex; align-items: center; gap: 7px; align-self: stretch; width: 58px; padding-left: 3px; background: #e2e2e2; }
.grip svg:last-child { margin-left: 3px; }
.prompt { margin-left: 4px; }
.command input {
  flex: 1;
  border: 0;
  padding: 0 0 0 6px;
  background: none;
  font: italic 12px "DejaVu Sans Mono", monospace;
}
.command input::placeholder { color: #999; opacity: 1; }
.up { margin-right: 4px; }
.vscroll { width: 16px; padding: 18px 4px 0 5px; background: #efefef; }
.vscroll i { display: block; height: 17px; background: #848484; }
.hscroll { flex: none; height: 20px; padding-top: 4px; background: #efefef; border-bottom: 4px solid #f4f4f4; }
.hscroll i { display: block; width: 17px; height: 8px; margin-left: calc(52% - 10px); background: #848484; }

/* status bar */
.status { position: relative; height: 30px; margin-bottom: 1px; padding: 0 0 2px 14px; background: #d8d8d8; border-bottom: 1px solid #aaa; }
.status .active { align-self: flex-start; width: 70px; height: 24px; margin-left: -1px; }
.status .tab:not(.active) { padding: 0 8px 0 5px; }
.status .tab:not(.active) + svg { margin-right: 1px; }
.add { padding: 0 10px 0 9px; }
.toggles { display: flex; margin-left: auto; padding-right: 2px; height: 23px; color: #222; }
.toggles > * { background: #f4f4f4; }
.toggles svg { color: #555; }
.toggles button { display: flex; align-items: center; justify-content: center; }
.coords { width: 180px; padding-right: 5px; margin-right: 4px; line-height: 23px; text-align: right; white-space: nowrap; }
.toggles .model { width: 48px; margin-right: 4px; }
.group { display: flex; align-items: center; }
.group button { height: 23px; }
.grid { gap: 8px; width: 61px; padding-left: 4px; margin-right: 4px; }
.modes { width: 270px; gap: 7px; padding-left: 4px; margin-right: 4px; }
.modes .on { width: 21px; background: #c8e2f6; box-shadow: inset 0 0 0 1px #7fb2da; }
.modes .far { margin-left: 2px; }
.toggles .scale { gap: 3px; }
.gear { width: 37px; gap: 9px; padding-left: 3px; margin-right: 3px; }
.toggles .single { width: 23px; margin-right: 4px; }
.toggles .wider { margin-left: 4px; }
.toggles .single:last-child { margin-right: 0; }
.pointer { position: absolute; right: 0; bottom: -2px; }
```
FILE: survey.js
```js
// Spot heights on two map sheets. Sheet units: 1.96 per pixel east, 3 per pixel south.
// A "v" after a point means that its label carries a leader tick.
const sheets = [
  { top: 180, points: `869,26 659,76 763,76 818,67 881,73 988,73 1053,64v 1143,59 1217,73v 699,111 839,121 920,119 1014,121 1091,108 1170,106 1246,130 668,136 767,139 708,170 678,196 790,189 865,169 947,166 1040,168 1116,155 1191,160 1142,203 1262,188 1286,192 722,229 890,215 969,217 1068,211 1202,216 659,248 817,236 909,258v 993,268 1093,260 1171,248 1236,265 1270,248 1295,253 620,265 580,281 745,277 541,302 591,308 672,310 839,289 938,313 1012,314v 1193,299 1252,321 1309,318v 344,316 397,306v 506,331 538,340 767,329 619,351 698,358 858,342 959,366 1045,364 1113,342 1205,358v 293,361 327,373 385,364 405,363 473,367 793,376 1149,394 1264,379 1317,380v 439,401 558,393 646,398 721,408 818,424 886,419 980,418 1070,413 1231,411 277,417 312,430 370,421 401,417 505,415 580,447 667,449 748,456 1283,434 1325,433v 1340,444v 1169,446 1093,464 1003,469 261,473 297,487 354,477 393,477 445,460 526,467 603,499 690,501 771,505 841,475 917,478 1252,465 1302,489 1191,500 1334,502v 428,507v 480,505 454,519 544,522 863,529 934,526v 1027,518 1108,517 1271,518 250,532 280,543 338,534 380,535 502,556 627,548 714,551 795,557 877,562 952,582v 1202,556v 1136,568 426,569 568,572 464,581 1058,592 1291,571 1343,565 236,594 267,598 326,591 370,595 520,609 597,617 649,599 735,604 814,613 905,632 981,638 1082,641 1159,622 1237,603 1310,627 415,637 473,639 254,660 219,661 315,651 360,655 537,657v 618,670 672,653 755,659 833,666 920,681v 1257,656 1006,686 1104,691 1181,674 411,698 450,696 482,695 505,692 571,706 698,700 1283,704 204,718 241,718 300,709 354,716 636,727 776,714 853,718 1204,722 398,757 439,756 526,745 597,757 713,748v 795,767 877,769 949,740 1028,739 1113,741 1308,751 191,776 227,775 288,767 342,773 470,775 464,790 547,797 654,782 615,811 741,804 970,795 1052,789 1148,795 1242,788 175,833 211,837 272,824 327,831 385,814 428,814 482,834 464,851 567,852 674,835 757,861 817,820 900,821 992,847 1075,840 1168,849 1258,844 1315,812 158,889 196,893 253,879 312,887 370,871 416,874 490,890 537,883 589,904 637,896 697,887 838,872 919,876 1013,898 1271,904 1332,869 144,946 180,950 241,937 292,940 352,925 402,931 458,912 513,935 560,934 659,944 716,942 776,917 860,924 938,930 1116,928 1185,907 1338,930 609,958 493,957 441,967 1034,952 1203,961 1283,962 336,982 387,988 575,991 690,992 735,999 797,972 881,977 959,982 1054,1007 1137,982 1348,991 128,1003 164,1006 229,994 279,999 466,1004 508,1007 628,1014 1310,1009 1357,1021 1226,1012 320,1039 367,1040 417,1017 207,1048 149,1063 111,1058 266,1057 556,1028 591,1047 500,1051 709,1046 754,1054 817,1025 901,1031 979,1036 1153,1039 1339,1054 1247,1065 1072,1063 403,1075 447,1069 516,1068 569,1088 649,1069 302,1094 351,1106 191,1103 244,1108 95,1115 136,1120 488,1109 606,1104 730,1102 764,1105 838,1079 921,1085 1000,1090 1172,1093 1094,1118 1269,1117 1355,1111 383,1127 437,1129 524,1129 670,1123 738,1137 788,1138 943,1134 1022,1144 1191,1147 280,1144 168,1154 61,1160 135,1165v 224,1162 329,1157 474,1165 520,1157 580,1149 626,1157` },
  { top: 560, points: `88,37 193,55 257,55 45,79 131,75 75,94 99,97 183,98 242,82 310,71 368,43 417,42 449,74 504,73 536,55 596,66 652,63 691,39 753,42 806,41 877,31 965,49 1038,53v 1114,31 1290,31 1361,31 1202,64v 281,101 346,96 397,96 711,94 767,86 823,83 897,85 985,104 1064,111 1134,85 1307,86 1382,86 33,136 62,152 106,157 132,139 197,157 243,149 306,144 319,121 358,141 430,129 483,127 544,116 537,139 608,124 676,113 840,126 780,132 921,135 1153,140 1235,114 1322,143 1394,144 730,149 395,161 368,174 449,177 477,187 517,191 550,178 608,159 639,171 697,166 796,177 858,169 942,187 1004,159 1083,167 1256,165 21,195 73,210 141,200 214,214 246,211 326,206 487,198 510,221 608,209 657,212 712,223 750,206 811,221 874,212 1025,212 1103,223 1174,195 1275,218 1338,199 56,226 115,259 160,257 212,277 261,268 325,265 381,265 445,259 470,255 564,240 572,274 624,254 673,256 768,259 826,267 891,258 962,243 1046,265 1193,249 1294,274 1353,256 153,284 191,307 556,291v 640,299 691,300 727,281 789,316 841,311 907,302 978,300 1117,278v 1066,319 1202,308v 1371,311 507,308 453,321 397,324 334,324 282,321 231,328 605,329 749,335 1143,327 1310,328 656,344 707,344 564,356 291,358 521,366 856,356 924,346 996,356 1080,369v 1234,358 1387,367 807,370 350,389 414,380 468,377 629,379 670,387 723,387 769,388 941,390 1167,377 1331,383 872,402 586,410 1018,407 1253,413 410,423 537,422 488,433 448,445 650,433 686,433 740,432 830,422 960,433 888,446 1045,453 1107,427 1189,429 1346,439 1406,422 599,463v 518,473 553,478 804,468 852,475 757,476 702,479 670,487 478,487 904,490 976,475 1068,504 1128,481 1205,488v 1271,467 1355,499 1433,513 629,518 717,523 774,518 830,517 872,532 921,533 992,519 1149,536 1229,537 1291,523 1380,548 535,530 559,534 488,548 693,540 761,553 795,558 1085,561 1008,563 732,567 641,576 845,574 892,586 936,579 592,586 538,592 708,599 748,611 783,604 813,598 1023,606 1100,618 1170,591 1247,593 1308,579 1404,598 1446,572 502,639 549,652 611,640 667,625 869,622 944,621v 833,638 902,637v 1040,649 1191,645 1265,648 1329,632 1453,632 1409,658 721,657 763,656 801,660 901,659 853,676 965,670 1117,674v 683,683 510,700 574,698 777,699 739,714 819,716 876,712 928,695 1056,693 981,715 1151,715 1206,704 1283,704 1347,687 1469,688 1417,718 605,741 646,731 702,737 794,745 900,747 947,751 1072,737 527,758 842,769 758,770 998,759 929,773 1089,779 1173,767 1227,755 1302,759 1353,748 1484,748 1438,772 564,786 604,787 645,786 721,793 809,791 898,805 957,797 1013,802 1245,809 1364,807 1495,807 675,826 777,825 868,818 931,826 985,820 1105,824 1185,826 1318,818 1454,828 824,838 745,844 904,857 1012,847 1031,846 1262,864 1378,865 946,871 1117,870v 1496,868 799,879 840,883 678,889 702,886 1035,881 1049,888 992,894 1200,884 1329,877 1462,889 764,898 919,904 961,917 1139,910 1053,923 1069,930 1277,924 1394,922 1513,926 856,930 817,935 723,941 1009,940 1226,933 1347,932 683,951 783,953 934,952 1156,953 1477,946 979,964 1071,968 1091,969 870,973 1025,985 837,989 743,996 950,997 1170,996 1247,987 1295,980 1365,988 1409,978 800,1009 886,1019 995,1008 1086,1012 1112,1006 1042,1031 1137,1042 1177,1040v 1232,1030 1275,1029 1315,1028 1355,1026 857,1043 967,1043 764,1051 1012,1057 1100,1056 902,1064 810,1070 1058,1077 1159,1079 982,1090 1183,1087v 877,1098 781,1106 917,1109 1028,1102 1115,1101 1158,1115 1162,1127 1074,1123 825,1127 995,1140 897,1151 933,1152 1045,1149` }
];

const shapes = ["h1m.5 0h3m.5 .5h1m.5 -.5h2.500", "h1.500m.5 0h2m.5 .5h1m.5 -.5h3", "h1m1 0h2.500m.5 0h4", "h1.500m.5 .3h3m.5 0h.5m.5 -.3h2"];
let path = "";
let index = 0;
for (const sheet of sheets) {
  for (const point of sheet.points.split(" ")) {
    const [x, y] = point.split(",").map(parseFloat);
    const px = Math.round(530 + x / 1.96);
    const py = Math.round(sheet.top + y / 3);
    path += `M${px - 4} ${py}${shapes[index++ % shapes.length]}`;
    if (point.endsWith("v")) path += `M${px} ${py + 1}v2`;
  }
}
document.getElementById("marks").setAttribute("d", path);
```
